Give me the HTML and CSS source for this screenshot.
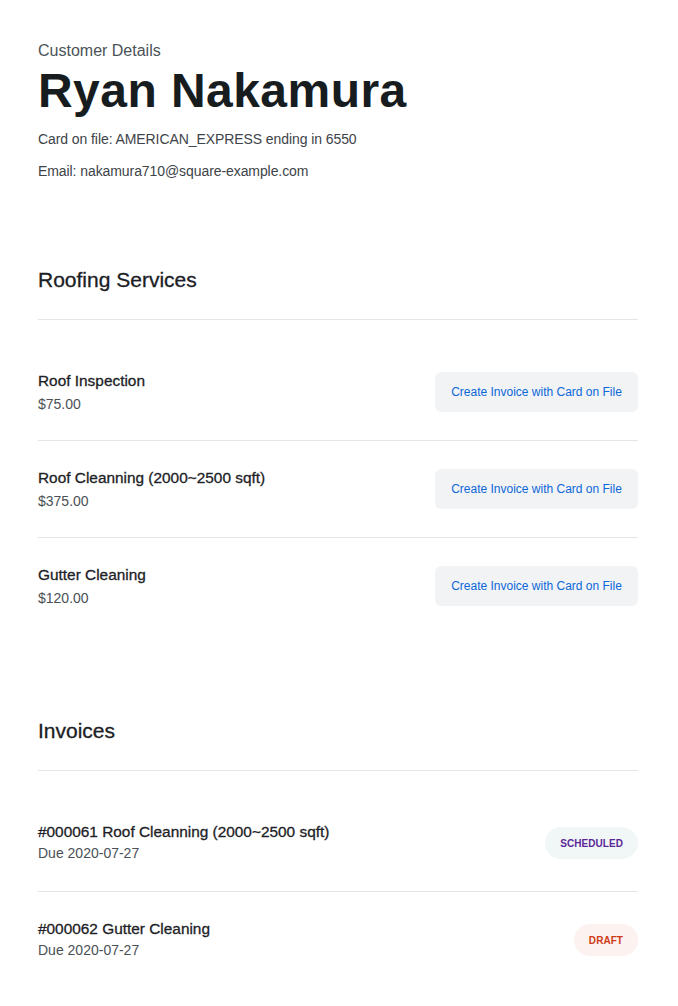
FILE: index.html
```html
<!DOCTYPE html>
<html lang="en">
<head>
<meta charset="utf-8">
<title>Customer Details</title>
<link rel="stylesheet" href="styles.css">
</head>
<body>
<main class="page">
  <header class="customer">
    <p class="eyebrow">Customer Details</p>
    <h1 class="name">Ryan Nakamura</h1>
    <p class="meta">Card on file: AMERICAN_EXPRESS ending in 6550</p>
    <p class="meta meta-email">Email: nakamura710@square-example.com</p>
  </header>

  <section class="section section-services">
    <h2 class="section-title">Roofing Services</h2>
    <ul class="list">
      <li class="row">
        <div class="info">
          <div class="title">Roof Inspection</div>
          <div class="sub">$75.00</div>
        </div>
        <button class="btn" type="button">Create Invoice with Card on File</button>
      </li>
      <li class="row">
        <div class="info">
          <div class="title">Roof Cleanning (2000~2500 sqft)</div>
          <div class="sub">$375.00</div>
        </div>
        <button class="btn" type="button">Create Invoice with Card on File</button>
      </li>
      <li class="row">
        <div class="info">
          <div class="title">Gutter Cleaning</div>
          <div class="sub">$120.00</div>
        </div>
        <button class="btn" type="button">Create Invoice with Card on File</button>
      </li>
    </ul>
  </section>

  <section class="section section-invoices">
    <h2 class="section-title">Invoices</h2>
    <ul class="list">
      <li class="row">
        <div class="info info-tight">
          <div class="title">#000061 Roof Cleanning (2000~2500 sqft)</div>
          <div class="sub">Due 2020-07-27</div>
        </div>
        <span class="badge badge-scheduled">SCHEDULED</span>
      </li>
      <li class="row">
        <div class="info info-tight">
          <div class="title">#000062 Gutter Cleaning</div>
          <div class="sub">Due 2020-07-27</div>
        </div>
        <span class="badge badge-draft">DRAFT</span>
      </li>
    </ul>
  </section>
</main>
</body>
</html>
```
FILE: styles.css
```css
* { box-sizing: border-box; }

html, body {
  margin: 0;
  padding: 0;
  background: #ffffff;
}

body {
  font-family: "Liberation Sans", Arial, Helvetica, sans-serif;
  color: #1d2226;
}

.page {
  width: 600px;
  margin: 0 0 0 38px;
  padding-top: 41px;
  padding-bottom: 40px;
}

.customer p,
.customer h1 {
  margin: 0;
}

.eyebrow {
  font-size: 16px;
  line-height: 20px;
  color: #4b5258;
}

.name {
  margin-top: 2px !important;
  font-size: 48px;
  line-height: 56px;
  font-weight: 700;
  color: #171c1f;
  letter-spacing: 0.45px;
}

.meta {
  margin-top: 10px !important;
  font-size: 14px;
  line-height: 20px;
  color: #3d4348;
  letter-spacing: -0.08px;
}

.meta-email {
  margin-top: 12px !important;
}

.section-services {
  margin-top: 87px;
}

.section-invoices {
  margin-top: 85px;
}

.section-title {
  margin: 0;
  font-size: 21px;
  line-height: 24px;
  font-weight: 400;
  color: #1b2024;
  -webkit-text-stroke: 0.3px #1b2024;
  padding-bottom: 27px;
  border-bottom: 1px solid #e3e5e8;
}

.list {
  list-style: none;
  margin: 24px 0 0;
  padding: 0;
}

.row {
  display: flex;
  align-items: center;
  justify-content: space-between;
  min-height: 97px;
  border-bottom: 1px solid #e3e5e8;
}

.row:last-child {
  border-bottom: none;
  min-height: 96px;
}

.info {
  display: flex;
  flex-direction: column;
  gap: 3px;
}

.info-tight {
  gap: 1px;
  padding-bottom: 1px;
}

.title {
  font-size: 15.4px;
  line-height: 20px;
  color: #1d2226;
  -webkit-text-stroke: 0.3px #1d2226;
}

.sub {
  font-size: 14px;
  line-height: 20px;
  color: #4a5056;
}

.btn {
  font-family: "Liberation Sans", Arial, Helvetica, sans-serif;
  height: 40px;
  width: 203px;
  padding: 0;
  border: none;
  border-radius: 6px;
  background: #f2f3f5;
  color: #0b68d8;
  font-size: 12px;
  cursor: pointer;
}

.badge {
  display: inline-flex;
  align-items: center;
  height: 32px;
  padding: 0 15px;
  border-radius: 16px;
  font-size: 10px;
  font-weight: 700;
  letter-spacing: 0.05px;
}

.badge-scheduled {
  background: #f1f7f7;
  color: #5b2798;
}

.badge-draft {
  background: #fcf2f0;
  color: #cf3a17;
}
```
